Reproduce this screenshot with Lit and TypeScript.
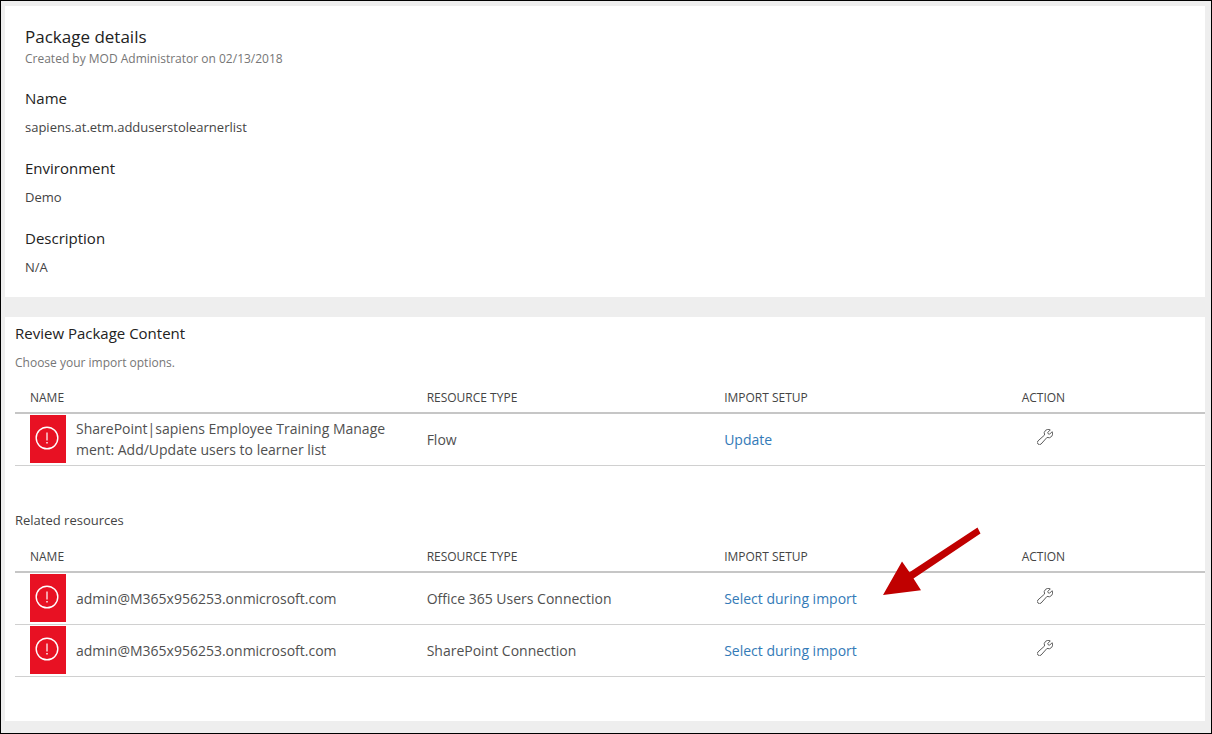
import { LitElement, html, css, svg, nothing } from "lit";
import { customElement, property } from "lit/decorators.js";

interface Resource {
  name: string;
  type: string;
  setup: string;
  pointed?: boolean;
}

const packageContent: Resource[] = [
  {
    name: "SharePoint|sapiens Employee Training Management: Add/Update users to learner list",
    type: "Flow",
    setup: "Update",
  },
];

const relatedResources: Resource[] = [
  {
    name: "admin@M365x956253.onmicrosoft.com",
    type: "Office 365 Users Connection",
    setup: "Select during import",
    pointed: true,
  },
  {
    name: "admin@M365x956253.onmicrosoft.com",
    type: "SharePoint Connection",
    setup: "Select during import",
  },
];

const alertIcon = html`<svg class="alert" viewBox="0 0 24 24" aria-hidden="true">
  ${svg`<circle cx="12" cy="12" r="10.8" fill="none" stroke="#fff" stroke-width="1.4"/>
  <path d="M11.4 6.5h1.2v8h-1.2zM11.3 16h1.4v1.5h-1.4z" fill="#fff"/>`}
</svg>`;

const wrenchIcon = html`<svg class="wrench" viewBox="0 0 16 16" aria-hidden="true">
  ${svg`<path d="M13.3 0.9A4 4 0 0 0 7.6 6L1 11.9A2.1 2.1 0 0 0 4.1 15L10 8.4A4 4 0 0 0 15.1 2.7L12.6 5.2L11.2 4.8L10.8 3.4Z"
    fill="none" stroke="#5c5c5c" stroke-width="1" stroke-linejoin="round"/>`}
</svg>`;

const arrow = html`<svg class="arrow" viewBox="0 0 100 70" aria-hidden="true">
  ${svg`<path d="M1 69L20 35.5L27.5 46.2L95.5 1.5L98.5 7.5L31.5 52.5L39 64.2Z" fill="#c00000"/>`}
</svg>`;

@customElement("resource-table")
export class ResourceTable extends LitElement {
  @property({ attribute: false }) rows: Resource[] = [];
  @property() label = "";

  static styles = css`
    :host {
      display: block;
    }
    .table {
      width: 100%;
      table-layout: fixed;
      border-collapse: separate;
      border-spacing: 0;
      font-size: 14px;
      line-height: 21px;
      color: #505050;
    }
    .head,
    .cell {
      box-sizing: border-box;
    }
    .wide {
      width: 33.33%;
    }
    .mid {
      width: 25%;
    }
    .head {
      padding: 6px 15px 4px;
      border-bottom: 2px solid #c6c6c6;
      text-align: left;
      font-size: 12px;
      line-height: 20px;
      font-weight: 500;
      color: #444;
    }
    .cell {
      height: 52px;
      padding: 1px 15px 2px;
      border-bottom: 1px solid #d0d0d0;
      vertical-align: middle;
    }
    .pointed {
      position: relative;
    }
    .resource {
      display: flex;
      align-items: center;
      gap: 10px;
    }
    .tile {
      flex: none;
      display: flex;
      justify-content: center;
      box-sizing: border-box;
      width: 36px;
      height: 48px;
      padding: 11px 2px 0 0;
      background: #e81123;
    }
    .alert {
      width: 24px;
      height: 24px;
    }
    .text {
      word-break: break-all;
    }
    .link {
      color: #337ab7;
      text-decoration: none;
    }
    .button {
      display: block;
      margin-left: 15px;
      padding: 0 0 4px;
      border: 0;
      background: none;
      cursor: pointer;
    }
    .wrench {
      display: block;
      width: 16px;
      height: 16px;
    }
    .arrow {
      position: absolute;
      left: 173px;
      top: -47px;
      width: 100px;
      height: 70px;
      pointer-events: none;
    }
  `;

  render() {
    return html`<table class="table" aria-label=${this.label}>
      <thead>
        <tr>
          <th class="head wide" scope="col">NAME</th>
          <th class="head mid" scope="col">RESOURCE TYPE</th>
          <th class="head mid" scope="col">IMPORT SETUP</th>
          <th class="head" scope="col">ACTION</th>
        </tr>
      </thead>
      <tbody>
        ${this.rows.map(
          (row) => html`<tr>
            <td class="cell">
              <div class="resource">
                <span class="tile">${alertIcon}</span>
                <span class="text">${row.name}</span>
              </div>
            </td>
            <td class="cell">${row.type}</td>
            <td class="cell ${row.pointed ? "pointed" : ""}">
              <a class="link" href="#">${row.setup}</a>${row.pointed ? arrow : nothing}
            </td>
            <td class="cell">
              <button class="button" type="button" aria-label="Configure">${wrenchIcon}</button>
            </td>
          </tr>`
        )}
      </tbody>
    </table>`;
  }
}

@customElement("app-root")
export class AppRoot extends LitElement {
  static styles = css`
    :host {
      display: block;
      box-sizing: border-box;
      min-height: 100vh;
      padding: 5px 6px 12px 4px;
      border: 1px solid #000;
      background: #eee;
      font-family: "Open Sans", "Noto Sans", sans-serif;
      color: #444;
    }
    .page {
      display: flex;
      flex-direction: column;
      gap: 20px;
    }
    .panel {
      background: #fff;
    }
    .details {
      padding: 18px 20px 20px;
    }
    .review {
      padding: 5px 0 44px 10px;
    }
    .title,
    .subtitle,
    .note,
    .list,
    .term,
    .value,
    .related {
      margin: 0;
      font-weight: 400;
    }
    .title {
      font-size: 17px;
      line-height: 25px;
      color: #222;
    }
    .note {
      font-size: 12px;
      line-height: 20px;
      color: #767676;
    }
    .list {
      display: grid;
      gap: 20px;
      padding-top: 18px;
    }
    .term,
    .subtitle {
      font-size: 15px;
      line-height: 22px;
      color: #222;
    }
    .value {
      padding-top: 8px;
      font-size: 13px;
      line-height: 20px;
    }
    .choose {
      padding: 9px 0;
    }
    .related {
      padding: 44px 0 11px;
      font-size: 13px;
      line-height: 20px;
    }
  `;

  render() {
    return html`<main class="page">
      <section class="panel details">
        <h1 class="title">Package details</h1>
        <p class="note">Created by MOD Administrator on 02/13/2018</p>
        <dl class="list">
          <div>
            <dt class="term">Name</dt>
            <dd class="value">sapiens.at.etm.adduserstolearnerlist</dd>
          </div>
          <div>
            <dt class="term">Environment</dt>
            <dd class="value">Demo</dd>
          </div>
          <div>
            <dt class="term">Description</dt>
            <dd class="value">N/A</dd>
          </div>
        </dl>
      </section>
      <section class="panel review">
        <h2 class="subtitle">Review Package Content</h2>
        <p class="note choose">Choose your import options.</p>
        <resource-table label="Package content" .rows=${packageContent}></resource-table>
        <h3 class="related">Related resources</h3>
        <resource-table label="Related resources" .rows=${relatedResources}></resource-table>
      </section>
    </main>`;
  }
}
